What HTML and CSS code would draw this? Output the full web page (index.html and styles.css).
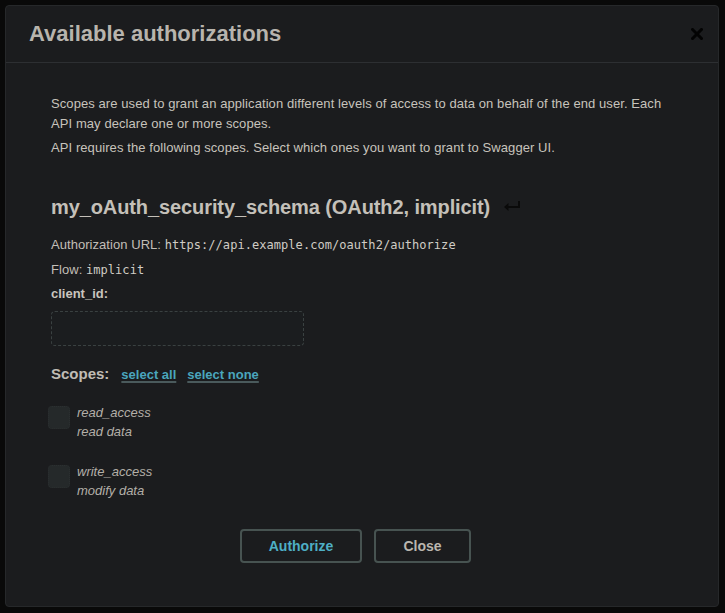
FILE: index.html
```html
<!DOCTYPE html>
<html lang="en">
<head>
<meta charset="utf-8">
<title>Available authorizations</title>
<link rel="stylesheet" href="styles.css">
</head>
<body>
<div class="modal">
  <div class="modal-header">
    <h3 class="modal-title">Available authorizations</h3>
    <button class="close-x" aria-label="Close">
      <svg width="12" height="12" viewBox="0 0 12 12"><path d="M1.5 1.5 L10.5 10.5 M10.5 1.5 L1.5 10.5" stroke="#030303" stroke-width="3" stroke-linecap="square"/></svg>
    </button>
  </div>
  <div class="modal-body">
    <p class="desc">Scopes are used to grant an application different levels of access to data on behalf of the end user. Each API may declare one or more scopes.</p>
    <p class="desc second">API requires the following scopes. Select which ones you want to grant to Swagger UI.</p>
    <h4 class="schema">my_oAuth_security_schema (OAuth2, implicit)
      <svg class="arrow" width="18" height="12" viewBox="0 0 18 12"><path d="M16 1 V7 H3" fill="none" stroke="#0a0a0a" stroke-width="2"/><path d="M1 7 L5.5 3 V11 Z" fill="#0a0a0a"/></svg>
    </h4>
    <p class="meta">Authorization URL: <code>https://api.example.com/oauth2/authorize</code></p>
    <p class="meta flow">Flow: <code>implicit</code></p>
    <label class="field-label" for="client_id">client_id:</label>
    <input class="text-input" id="client_id" type="text">
    <div class="scopes-row">
      <span class="scopes-title">Scopes:</span>
      <a class="scope-link" href="#">select all</a>
      <a class="scope-link" href="#">select none</a>
    </div>
    <div class="scope-item">
      <span class="check"></span>
      <div class="scope-text"><div>read_access</div><div>read data</div></div>
    </div>
    <div class="scope-item second-item">
      <span class="check"></span>
      <div class="scope-text"><div>write_access</div><div>modify data</div></div>
    </div>
    <div class="buttons">
      <button class="btn btn-auth">Authorize</button>
      <button class="btn btn-close">Close</button>
    </div>
  </div>
</div>
</body>
</html>
```
FILE: styles.css
```css
html, body {
  margin: 0;
  padding: 0;
  background: #090909;
  font-family: "Liberation Sans", Arial, sans-serif;
}
.modal {
  box-sizing: border-box;
  margin: 5px 0 0 5px;
  width: 714px;
  height: 602px;
  background: #1b1c1e;
  border: 1px solid #26282a;
  border-radius: 4px;
}
.modal-header {
  box-sizing: border-box;
  height: 57px;
  display: flex;
  align-items: center;
  justify-content: space-between;
  padding: 0 15px 0 23px;
  border-bottom: 1px solid #2d2f32;
}
.modal-title {
  margin: 0;
  font-size: 22px;
  font-weight: 700;
  color: #b8b4ad;
}
.close-x {
  background: none;
  border: 0;
  padding: 0;
  width: 12px;
  height: 12px;
  display: flex;
}
.modal-body {
  padding: 31px 45px 0 45px;
  color: #c7c3bc;
}
.desc {
  margin: 0;
  font-size: 13px;
  line-height: 20px;
  letter-spacing: 0.08px;
}
.desc.second {
  margin-top: 4px;
}
.schema {
  margin: 37px 0 0 0;
  font-size: 20px;
  line-height: 24px;
  font-weight: 700;
  color: #c4c0b9;
  letter-spacing: -0.1px;
  display: flex;
  align-items: center;
  gap: 13px;
}
.arrow {
  margin-top: -2px;
}
.meta {
  margin: 16px 0 0 0;
  font-size: 13px;
  line-height: 20px;
  color: #c2beb7;
  letter-spacing: 0.05px;
}
.meta.flow {
  margin-top: 5px;
}
.meta code {
  font-family: "DejaVu Sans Mono", monospace;
  font-size: 12px;
  color: #d0ccc5;
  letter-spacing: 0.05px;
}
.field-label {
  display: block;
  margin-top: 4px;
  font-size: 13px;
  line-height: 20px;
  font-weight: 700;
  color: #c9c5be;
}
.text-input {
  display: block;
  box-sizing: border-box;
  margin-top: 7px;
  width: 253px;
  height: 35px;
  background: #1b1d1f;
  border: 1px dashed #3a4141;
  border-radius: 4px;
}
.scopes-row {
  margin-top: 18px;
  display: flex;
  align-items: baseline;
  line-height: 20px;
}
.scopes-title {
  font-size: 15px;
  font-weight: 700;
  color: #c0bcb5;
  margin-right: 12px;
}
.scope-link {
  font-size: 13px;
  font-weight: 700;
  color: #4aa6bd;
  text-decoration: underline;
  text-decoration-color: #4a5a5c;
  text-decoration-thickness: 2px;
  text-underline-offset: 2px;
  margin-right: 11px;
}
.scope-item {
  margin-top: 18px;
  display: flex;
  align-items: flex-start;
  gap: 7px;
}
.scope-item.second-item {
  margin-top: 21px;
}
.check {
  box-sizing: border-box;
  margin: 3px 0 0 -3px;
  width: 22px;
  height: 23px;
  background: #25292a;
  border: 1px dotted #2b2f30;
  border-radius: 4px;
}
.scope-text {
  font-size: 13px;
  line-height: 19px;
  font-style: italic;
  color: #b3afa8;
}
.buttons {
  margin-top: 29px;
  display: flex;
  justify-content: center;
  gap: 12px;
  padding-right: 13px;
}
.btn {
  box-sizing: border-box;
  height: 34px;
  background: #1b1c1e;
  border: 2px solid #475351;
  border-radius: 4px;
  font-family: "Liberation Sans", Arial, sans-serif;
  font-size: 14px;
  font-weight: 700;
}
.btn-auth {
  width: 122px;
  color: #4eafc5;
}
.btn-close {
  width: 97px;
  color: #bab6af;
}
```
